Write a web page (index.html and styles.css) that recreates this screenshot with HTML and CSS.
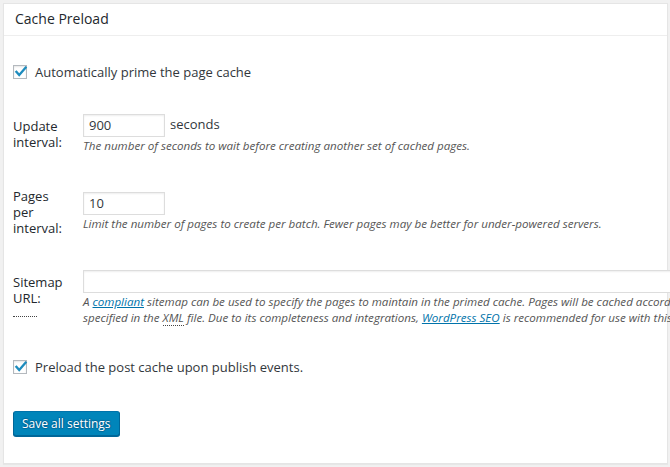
FILE: index.html
```html
<!DOCTYPE html>
<html lang="en">
<head>
<meta charset="utf-8">
<title>Cache Preload</title>
<link rel="stylesheet" href="styles.css">
</head>
<body>
<div class="postbox">
  <h3 class="hndle">Cache Preload</h3>
  <div class="inside">
    <label class="check-row">
      <span class="checkbox" role="checkbox" aria-checked="true"><svg viewBox="0 0 14 14" width="14" height="14"><polyline points="3.4,6.8 6.2,10 12.6,2.6" /></svg></span>
      Automatically prime the page cache
    </label>

    <div class="form-table">
      <div class="row">
        <div class="th">Update interval:</div>
        <div class="td">
          <div class="field-line"><span class="input small-text">900</span><span class="unit">seconds</span></div>
          <p class="description">The number of seconds to wait before creating another set of cached pages.</p>
        </div>
      </div>
      <div class="row">
        <div class="th">Pages per interval:</div>
        <div class="td">
          <div class="field-line"><span class="input small-text">10</span></div>
          <p class="description">Limit the number of pages to create per batch. Fewer pages may be better for under-powered servers.</p>
        </div>
      </div>
      <div class="row">
        <div class="th">Sitemap<br><abbr title="Uniform Resource Locator">URL</abbr>:</div>
        <div class="td">
          <div class="field-line"><span class="input large-text"></span></div>
          <p class="description wide">A <a href="#">compliant</a> sitemap can be used to specify the pages to maintain in the primed cache. Pages will be cached according to the priorities specified in the <abbr title="eXtensible Markup Language">XML</abbr> file. Due to its completeness and integrations, <a href="#">WordPress SEO</a> is recommended for use with this plugin.</p>
        </div>
      </div>
    </div>

    <label class="check-row second">
      <span class="checkbox" role="checkbox" aria-checked="true"><svg viewBox="0 0 14 14" width="14" height="14"><polyline points="3.4,6.8 6.2,10 12.6,2.6" /></svg></span>
      Preload the post cache upon publish events.
    </label>

    <div class="actions">
      <button class="button-primary" type="button">Save all settings</button>
    </div>
  </div>
</div>
</body>
</html>
```
FILE: styles.css
```css
html, body {
  margin: 0;
  padding: 0;
}

body {
  background: #f1f1f1;
  font-family: "Open Sans", "Liberation Sans", sans-serif;
  font-size: 13px;
  color: #444;
  overflow: hidden;
  padding: 3px;
}

/* panel */
.postbox {
  box-sizing: border-box;
  width: 665px;
  height: 461px;
  background: #fff;
  border: 1px solid #e5e5e5;
  box-shadow: 0 1px 1px rgba(0, 0, 0, 0.04);
}

.hndle {
  margin: 0;
  padding: 0 11px 2px;
  font-size: 14px;
  font-weight: 400;
  line-height: 29px;
  color: #23282d;
  border-bottom: 1px solid #eee;
}

.inside {
  padding: 26px 9px 0;
}

/* checkbox rows */
.check-row {
  display: flex;
  align-items: center;
  gap: 8px;
  line-height: 20px;
  color: #32373c;
}

.check-row.second {
  margin-top: 16px;
}

.checkbox {
  box-sizing: border-box;
  display: inline-flex;
  width: 14px;
  height: 14px;
  border: 1px solid #b4b9be;
  background: #fff;
  box-shadow: inset 0 1px 2px rgba(0, 0, 0, 0.1);
}

.checkbox svg {
  margin: -1px 0 0 -1px;
  overflow: visible;
}

.checkbox polyline {
  fill: none;
  stroke: #1e8cbe;
  stroke-width: 2.3;
  stroke-linecap: square;
  stroke-linejoin: miter;
}

/* settings table */
.form-table {
  margin-top: 17px;
}

.row {
  display: grid;
  grid-template-columns: 70px auto;
  align-items: center;
}

.th {
  align-self: start;
  padding: 19px 15px 19px 0;
  line-height: 16px;
  color: #23282d;
}

.td {
  padding: 15px 0;
}

.field-line {
  display: flex;
  align-items: center;
  gap: 5px;
  height: 23px;
}

.input {
  box-sizing: border-box;
  display: block;
  height: 23px;
  padding: 0 5px;
  line-height: 21px;
  border: 1px solid #ddd;
  background: #fff;
  box-shadow: inset 0 1px 2px rgba(0, 0, 0, 0.07);
  color: #32373c;
}

.small-text {
  width: 82px;
}

.large-text {
  width: 620px;
}

.unit {
  color: #32373c;
  margin-top: -3px;
}

.description {
  margin: 1px 0 0;
  font-size: 11.6px;
  font-style: italic;
  line-height: 16px;
  color: #555;
  white-space: nowrap;
}

.description.wide {
  width: 715px;
  white-space: normal;
}

a {
  color: #0073aa;
}

abbr {
  text-decoration: none;
  border-bottom: 1px dotted #444;
}

.th abbr {
  display: inline-block;
  padding-bottom: 10px;
}

/* button */
.actions {
  margin-top: 34px;
}

.button-primary {
  box-sizing: border-box;
  height: 25px;
  padding: 0 8px;
  font-family: inherit;
  font-size: 12px;
  line-height: 23px;
  color: #fff;
  background: #0085ba;
  border: 1px solid;
  border-color: #0073aa #006799 #006799;
  border-radius: 3px;
  box-shadow: 0 1px 0 #006799;
  text-shadow: 0 -1px 1px #006799, 1px 0 1px #006799, 0 1px 1px #006799, -1px 0 1px #006799;
  cursor: pointer;
}
```
